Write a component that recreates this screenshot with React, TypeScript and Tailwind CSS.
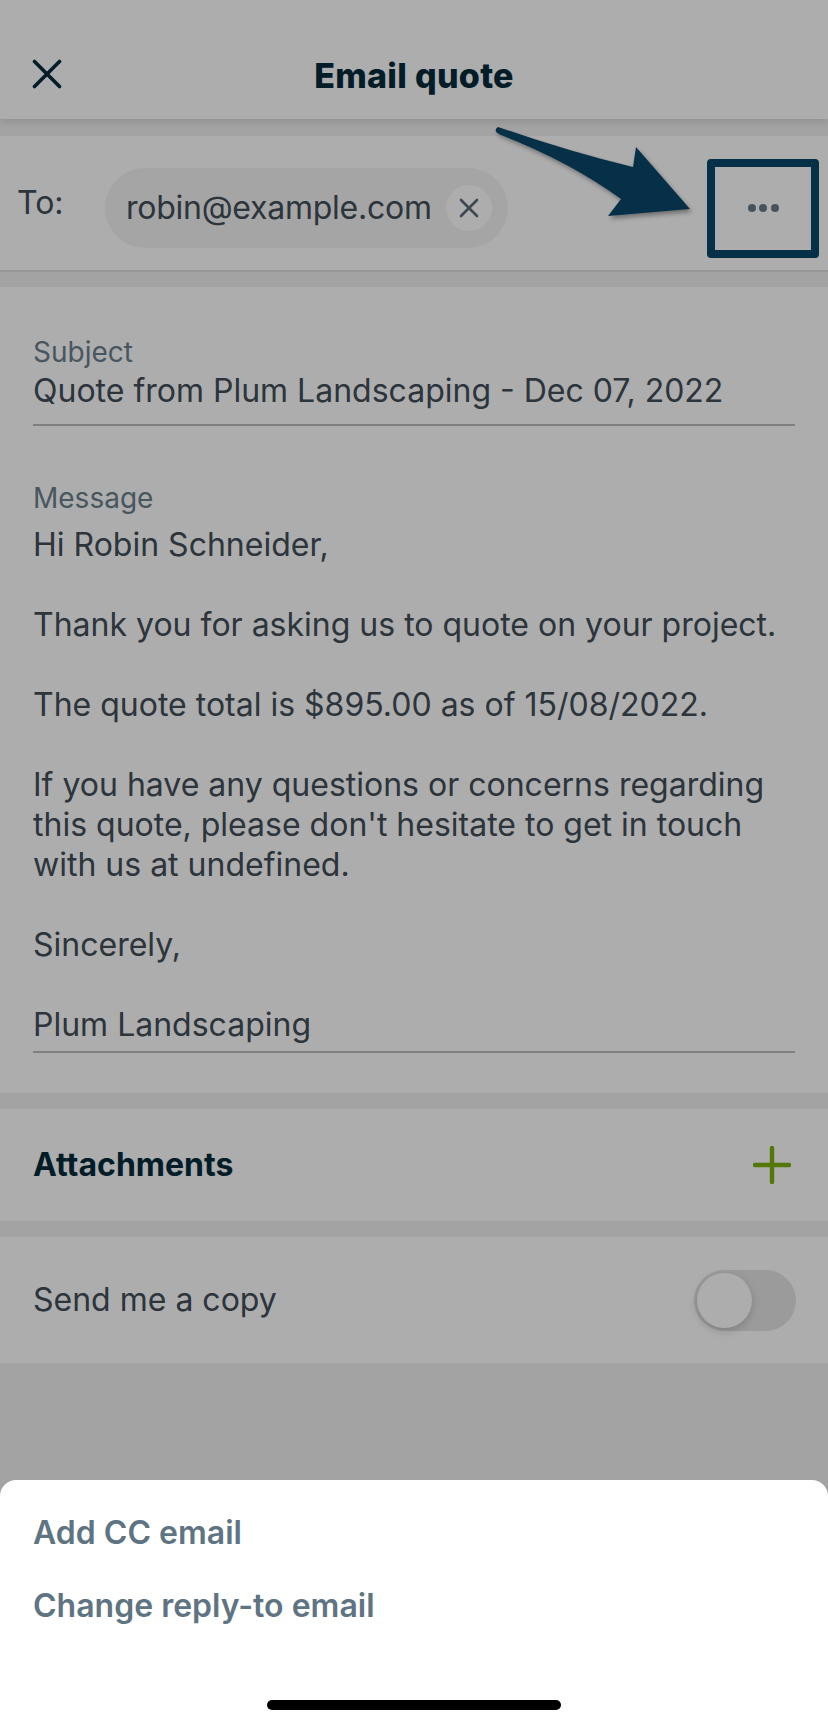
import React from "react";

const font = { fontFamily: "Inter, 'Noto Sans', sans-serif" };

function CloseIcon() {
  return (
    <svg width="30" height="30" viewBox="0 0 30 30" fill="none">
      <path d="M2.5 2.5 L27.5 27.5 M27.5 2.5 L2.5 27.5" stroke="#032b3a" strokeWidth="3.6" strokeLinecap="round" />
    </svg>
  );
}

function SmallX() {
  return (
    <svg width="22" height="22" viewBox="0 0 22 22" fill="none">
      <path d="M3 3 L19 19 M19 3 L3 19" stroke="#5b6a78" strokeWidth="2.6" strokeLinecap="round" />
    </svg>
  );
}

function PlusIcon() {
  return (
    <svg width="38" height="38" viewBox="0 0 38 38" fill="none">
      <path d="M19 2 L19 36 M2 19 L36 19" stroke="#7db00e" strokeWidth="4.4" strokeLinecap="round" />
    </svg>
  );
}

export default function App() {
  return (
    <div className="relative w-[828px] h-[1726px] overflow-hidden bg-[#f1f1f1]" style={font}>
      {/* Header */}
      <div className="relative h-[119px] bg-white pt-[33px] shadow-[0_3px_8px_rgba(0,0,0,0.12)]">
        <div className="relative flex h-[84px] items-center justify-center">
          <div className="absolute left-[32px] top-[26px]">
            <CloseIcon />
          </div>
          <div className="text-[34px] font-extrabold tracking-[0.3px] text-[#032b3a]">Email quote</div>
        </div>
      </div>

      {/* To row */}
      <div className="mt-[17px] flex h-[136px] items-start border-b-2 border-[#dcdcdc] bg-white pt-[32px]">
        <div className="mt-[15px] w-[105px] pl-[17px] text-[32px] leading-[40px] text-[#424e58]">To:</div>
        <div className="flex h-[80px] items-center rounded-full bg-[#f3f3f3] pl-[21px] pr-[16px]">
          <span className="text-[32px] leading-[40px] tracking-[-0.25px] text-[#424e58]">robin@example.com</span>
          <span className="ml-[14px] flex h-[46px] w-[46px] items-center justify-center rounded-full bg-white">
            <SmallX />
          </span>
        </div>
        <div className="ml-auto mr-[17px] flex h-[80px] w-[96px] items-center justify-center gap-[3.5px]">
          <span className="h-[8px] w-[8px] rounded-full bg-[#6b7c8a]" />
          <span className="h-[8px] w-[8px] rounded-full bg-[#6b7c8a]" />
          <span className="h-[8px] w-[8px] rounded-full bg-[#6b7c8a]" />
        </div>
      </div>

      {/* Subject & message */}
      <div className="mt-[15px] bg-white px-[33px] pt-[49px] pb-[40px]">
        <div className="text-[28px] leading-[32px] text-[#6b7f8e]">Subject</div>
        <div className="mt-[3px] border-b-2 border-[#bcbcbc] pb-[13px] text-[32px] leading-[40px] text-[#424e58]">
          Quote from Plum Landscaping - Dec 07, 2022
        </div>
        <div className="mt-[56px] text-[28px] leading-[32px] text-[#6b7f8e]">Message</div>
        <div className="mt-[11px] border-b-2 border-[#bcbcbc] pb-[6px] text-[32px] leading-[40px] text-[#424e58] whitespace-nowrap">
          <div>Hi Robin Schneider,</div>
          <div className="h-[40px]" />
          <div>Thank you for asking us to quote on your project.</div>
          <div className="h-[40px]" />
          <div>The quote total is $895.00 as of 15/08/2022.</div>
          <div className="h-[40px]" />
          <div>If you have any questions or concerns regarding</div>
          <div>this quote, please don't hesitate to get in touch</div>
          <div>with us at undefined.</div>
          <div className="h-[40px]" />
          <div>Sincerely,</div>
          <div className="h-[40px]" />
          <div>Plum Landscaping</div>
        </div>
      </div>

      {/* Attachments */}
      <div className="mt-[16px] flex h-[112px] items-center justify-between bg-white pl-[33px] pr-[37px]">
        <div className="text-[32px] font-bold leading-[40px] text-[#032b3a]">Attachments</div>
        <PlusIcon />
      </div>

      {/* Send copy */}
      <div className="mt-[16px] flex h-[126px] items-center justify-between bg-white pl-[33px] pr-[32px]">
        <div className="text-[32px] leading-[40px] text-[#424e58]">Send me a copy</div>
        <div className="flex h-[61px] w-[102px] items-center rounded-full bg-[#e5e5e6] pl-[3px]">
          <div className="h-[55px] w-[55px] rounded-full bg-white shadow-[0_3px_8px_rgba(0,0,0,0.18)]" />
        </div>
      </div>

      {/* Dim overlay */}
      <div className="absolute inset-0 bg-black/[0.32]" />

      {/* Annotation arrow */}
      <svg
        className="absolute left-[490px] top-[120px] drop-shadow-[2px_3px_2px_rgba(0,0,0,0.35)]"
        width="212"
        height="104"
        viewBox="0 0 212 104"
      >
        <path
          d="M8 7 Q 80 32 143 47 L 146 27 L 200 89 L 118 96 L 131 79 Q 80 42 11 15 Q 2 11 8 7 Z"
          fill="#053047"
        />
      </svg>
      <div className="absolute left-[707px] top-[159px] h-[99px] w-[112px] rounded-[4px] border-[8px] border-[#053047]" />

      {/* Bottom sheet */}
      <div className="absolute bottom-0 left-0 right-0 flex h-[246px] flex-col rounded-t-[16px] bg-white px-[33px] pt-[33px]">
        <div className="text-[32px] font-semibold leading-[40px] text-[#5f7482]">Add CC email</div>
        <div className="mt-[33px] text-[32px] font-semibold leading-[40px] text-[#5f7482]">Change reply-to email</div>
        <div className="mt-auto mb-[16px] h-[10px] w-[294px] self-center rounded-full bg-black" />
      </div>
    </div>
  );
}
